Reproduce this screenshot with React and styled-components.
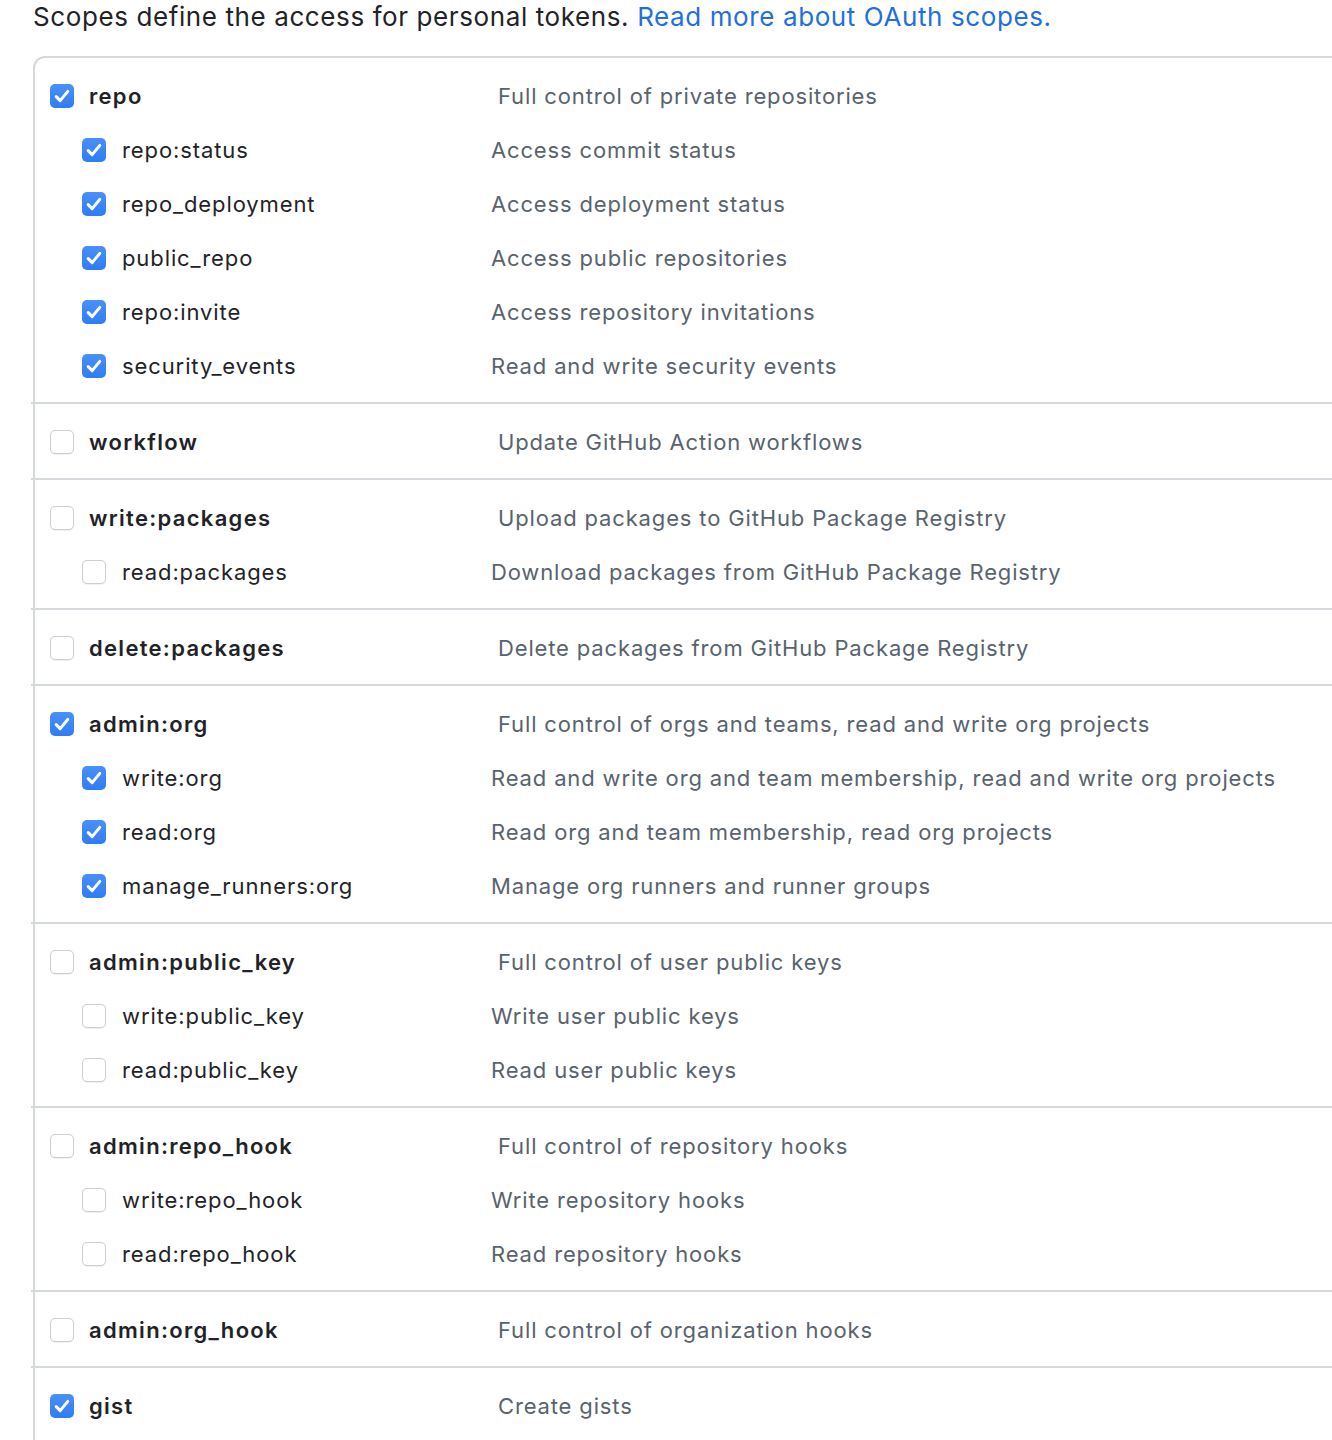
import React from "react";
import styled, { createGlobalStyle } from "styled-components";

const GlobalStyle = createGlobalStyle`
  body {
    margin: 0;
    background: #ffffff;
    overflow-x: hidden;
    font-family: Inter, "Noto Sans", "Liberation Sans", sans-serif;
    color: #1f2328;
  }
`;

const scopes = [
  {
    name: "repo",
    desc: "Full control of private repositories",
    checked: true,
    children: [
      { name: "repo:status", desc: "Access commit status" },
      { name: "repo_deployment", desc: "Access deployment status" },
      { name: "public_repo", desc: "Access public repositories" },
      { name: "repo:invite", desc: "Access repository invitations" },
      { name: "security_events", desc: "Read and write security events" },
    ],
  },
  { name: "workflow", desc: "Update GitHub Action workflows", checked: false },
  {
    name: "write:packages",
    desc: "Upload packages to GitHub Package Registry",
    checked: false,
    children: [
      { name: "read:packages", desc: "Download packages from GitHub Package Registry" },
    ],
  },
  { name: "delete:packages", desc: "Delete packages from GitHub Package Registry", checked: false },
  {
    name: "admin:org",
    desc: "Full control of orgs and teams, read and write org projects",
    checked: true,
    children: [
      { name: "write:org", desc: "Read and write org and team membership, read and write org projects" },
      { name: "read:org", desc: "Read org and team membership, read org projects" },
      { name: "manage_runners:org", desc: "Manage org runners and runner groups" },
    ],
  },
  {
    name: "admin:public_key",
    desc: "Full control of user public keys",
    checked: false,
    children: [
      { name: "write:public_key", desc: "Write user public keys" },
      { name: "read:public_key", desc: "Read user public keys" },
    ],
  },
  {
    name: "admin:repo_hook",
    desc: "Full control of repository hooks",
    checked: false,
    children: [
      { name: "write:repo_hook", desc: "Write repository hooks" },
      { name: "read:repo_hook", desc: "Read repository hooks" },
    ],
  },
  { name: "admin:org_hook", desc: "Full control of organization hooks", checked: false },
  { name: "gist", desc: "Create gists", checked: true },
];

export default function App() {
  return (
    <Page>
      <GlobalStyle />
      <Intro>
        Scopes define the access for personal tokens.{" "}
        <a href="#oauth">Read more about OAuth scopes.</a>
      </Intro>
      <ScopeBox>
        {scopes.map((group, i) => (
          <React.Fragment key={group.name}>
            {i > 0 && <Divider />}
            <Group>
              <Row>
                <NameCell $nested={false}>
                  <Check checked={group.checked} />
                  <Label $bold>{group.name}</Label>
                </NameCell>
                <Desc>{group.desc}</Desc>
              </Row>
              {(group.children || []).map((child) => (
                <Row key={child.name}>
                  <NameCell $nested>
                    <Check checked={group.checked} />
                    <Label>{child.name}</Label>
                  </NameCell>
                  <Desc>{child.desc}</Desc>
                </Row>
              ))}
            </Group>
          </React.Fragment>
        ))}
      </ScopeBox>
    </Page>
  );
}

function Check({ checked }) {
  return (
    <Box $checked={checked}>
      {checked && (
        <svg width="24" height="24" viewBox="0 0 24 24" fill="none">
          <path
            d="M6.2 12.6 L10.2 16.6 L17.8 7.4"
            stroke="#ffffff"
            strokeWidth="3"
            strokeLinecap="round"
            strokeLinejoin="round"
          />
        </svg>
      )}
    </Box>
  );
}

const Page = styled.div`
  padding-left: 33px;
`;

const Intro = styled.p`
  margin: 0;
  font-size: 26px;
  line-height: 34px;
  letter-spacing: 0.6px;
  color: #1f2328;
  a {
    color: #1f6fde;
    text-decoration: none;
  }
`;

const ScopeBox = styled.div`
  margin-top: 22px;
  width: 1340px;
  border-top: 2px solid #d5d8dc;
  border-left: 2px solid #d5d8dc;
  border-top-left-radius: 12px;
`;

const Divider = styled.div`
  height: 2px;
  margin-left: -4px;
  background: #d5d8dc;
`;

const Group = styled.div`
  padding: 11px 0 9px;
`;

const Row = styled.div`
  display: flex;
  align-items: center;
  height: 54px;
`;

const NameCell = styled.div`
  display: flex;
  align-items: center;
  gap: ${(p) => (p.$nested ? "16px" : "15px")};
  box-sizing: border-box;
  padding-left: ${(p) => (p.$nested ? "47px" : "15px")};
  width: ${(p) => (p.$nested ? "456px" : "463px")};
  flex-shrink: 0;
`;

const Box = styled.span`
  display: inline-flex;
  width: 24px;
  height: 24px;
  box-sizing: border-box;
  border-radius: 5px;
  flex-shrink: 0;
  background: ${(p) =>
    p.$checked ? "linear-gradient(#4990f9, #2f7cf4)" : "#ffffff"};
  border: ${(p) => (p.$checked ? "none" : "1px solid #cfcfcf")};
  box-shadow: ${(p) => (p.$checked ? "none" : "0 0.5px 1px rgba(0,0,0,0.06)")};
`;

const Label = styled.span`
  font-size: 22px;
  font-weight: ${(p) => (p.$bold ? 600 : 400)};
  letter-spacing: ${(p) => (p.$bold ? "1.3px" : "0.9px")};
  color: #1f2328;
  white-space: nowrap;
`;

const Desc = styled.span`
  font-size: 22px;
  letter-spacing: 0.85px;
  color: #59636e;
  white-space: nowrap;
`;
